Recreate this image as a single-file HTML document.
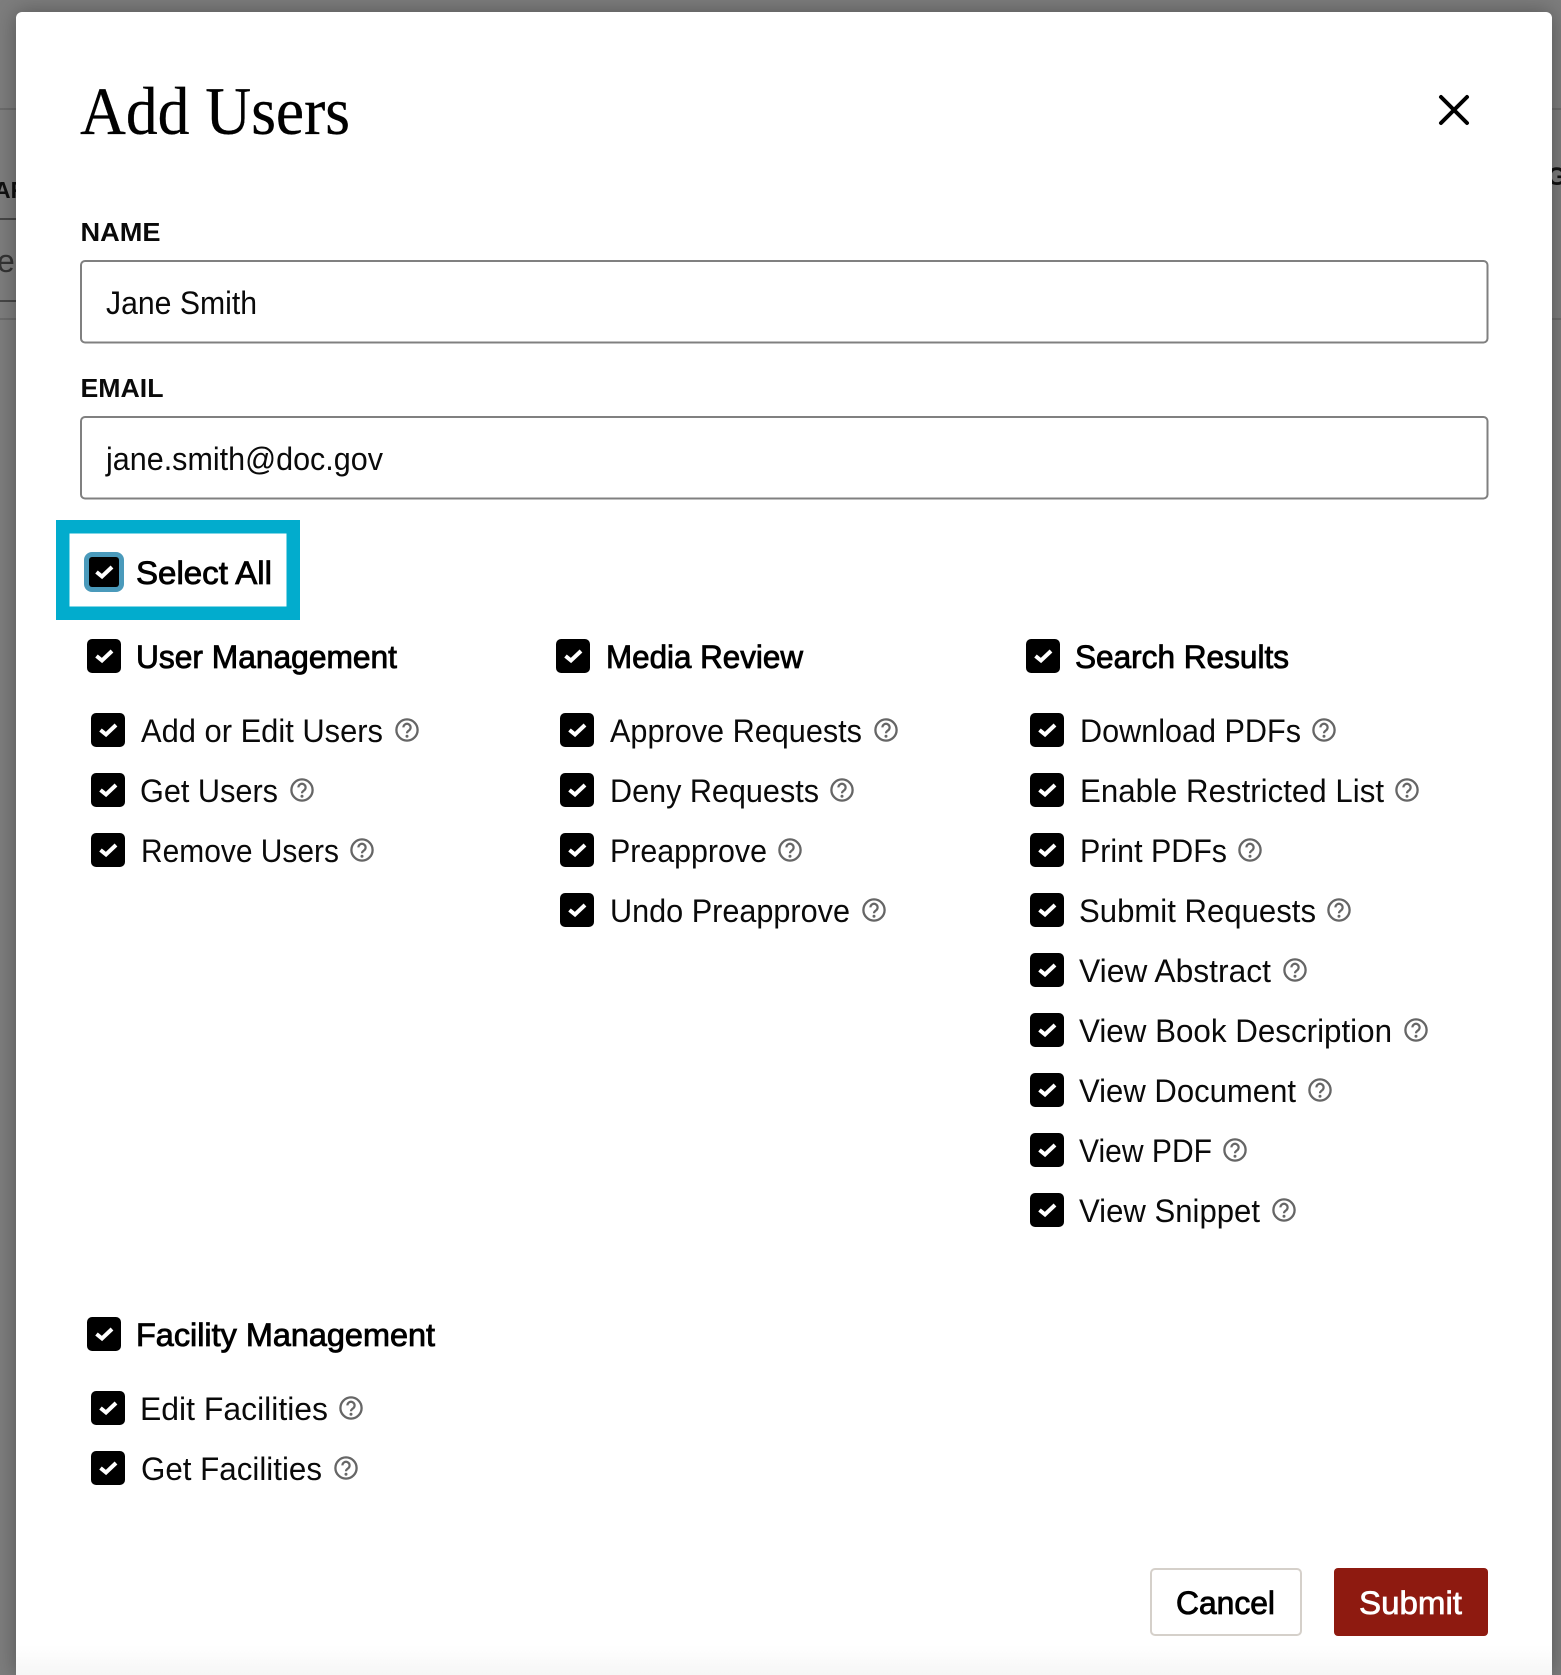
<!DOCTYPE html>
<html lang="en"><head><meta charset="utf-8"><title>Add Users</title>
<style>
html,body{margin:0;padding:0;width:1561px;height:1675px;overflow:hidden;background:#7d7d7d}
.w{position:relative;width:1561px;height:1675px;overflow:hidden}
.m{position:absolute;left:16px;top:12px;width:1536px;height:1663px;background:#fff;border-radius:6px 6px 0 0;box-shadow:0 0 22px rgba(0,0,0,.32)}
.f{position:absolute;left:16px;top:1645px;width:1536px;height:30px;background:linear-gradient(#fff,#f6f6f6)}
svg{position:absolute;left:0;top:0;display:block}
text{font-family:"Liberation Sans",sans-serif;font-size:32px;fill:#0a0a0a}
.s{font-family:"Liberation Serif",serif;font-size:68px;fill:#000;stroke:#000;stroke-width:.3px}
.b{stroke:#000;stroke-width:.85px;fill:#000}
</style></head><body><div class="w">
<svg width="1561" height="1675" style="z-index:0">
<g fill="#6c6c6c"><rect x="0" y="108" width="20" height="2"/><rect x="0" y="318" width="20" height="2"/><rect x="1545" y="108" width="16" height="2"/><rect x="1545" y="318" width="16" height="2"/></g>
<g fill="#464646"><rect x="0" y="218" width="20" height="2"/><rect x="0" y="300" width="20" height="2"/></g>
<text x="-6" y="198" style="font-size:23px;font-weight:700;fill:#111">AR</text>
<text x="-3" y="272" style="fill:#333">e</text>
<text x="1547" y="185" style="font-size:25px;font-weight:700;fill:#111">G</text>
</svg>
<div class="m"></div><div class="f"></div>
<svg width="1561" height="1675" viewBox="0 0 1561 1675" style="z-index:2">
<defs>
<g id="c"><rect width="34" height="34" rx="5" fill="#000"/><path d="M9.5 17 L15 21.5 L25 12" fill="none" stroke="#fff" stroke-width="4"/></g>
<g id="h"><circle r="10.6" fill="none" stroke="#666" stroke-width="2.3"/><path d="M-3.6-2.6a3.6 3.6 0 1 1 5.6 3c-1.3.8-2 1.4-2 2.8" fill="none" stroke="#666" stroke-width="2.2"/><circle cy="6.2" r="1.5" fill="#666"/></g>
</defs>

<text class="s" x="80" y="134" textLength="270" lengthAdjust="spacingAndGlyphs">Add Users</text>
<path d="M1441 97 L1467 123 M1467 97 L1441 123" stroke="#000" stroke-width="4" stroke-linecap="round" fill="none"/>

<text x="80.500" y="241" textLength="80" lengthAdjust="spacingAndGlyphs" style="font-size:26px;font-weight:700">NAME</text>
<rect x="81" y="261" width="1406.500" height="81.500" rx="4" fill="#fff" stroke="#808080" stroke-width="2"/>
<text x="106" y="314" textLength="151" lengthAdjust="spacingAndGlyphs">Jane Smith</text>

<text x="80.500" y="397" textLength="83" lengthAdjust="spacingAndGlyphs" style="font-size:26px;font-weight:700">EMAIL</text>
<rect x="81" y="417" width="1406.500" height="81.500" rx="4" fill="#fff" stroke="#808080" stroke-width="2"/>
<text x="106" y="470" textLength="277" lengthAdjust="spacingAndGlyphs">jane.smith@doc.gov</text>

<rect x="62.750" y="526.750" width="230.500" height="86.500" fill="none" stroke="#02accd" stroke-width="13.500"/>
<rect x="84" y="552" width="40" height="40" rx="8" fill="#4a9abb"/>
<rect x="89" y="557" width="30" height="30" rx="3" fill="#000"/>
<path d="M96.500 572 L102 576.500 L112 567" fill="none" stroke="#fff" stroke-width="4"/>
<text class="b" x="136" y="584" textLength="136" lengthAdjust="spacingAndGlyphs">Select All</text>

<!-- User Management -->
<use href="#c" x="87" y="639"/>
<text class="b" x="136" y="668" textLength="261" lengthAdjust="spacingAndGlyphs">User Management</text>
<use href="#c" x="91" y="713"/><text x="141" y="742" textLength="242" lengthAdjust="spacingAndGlyphs">Add or Edit Users</text><use href="#h" x="407" y="730"/>
<use href="#c" x="91" y="773"/><text x="140" y="802" textLength="138" lengthAdjust="spacingAndGlyphs">Get Users</text><use href="#h" x="302" y="790"/>
<use href="#c" x="91" y="833"/><text x="141" y="862" textLength="198" lengthAdjust="spacingAndGlyphs">Remove Users</text><use href="#h" x="362" y="850"/>

<!-- Media Review -->
<use href="#c" x="556" y="639"/>
<text class="b" x="606" y="668" textLength="197" lengthAdjust="spacingAndGlyphs">Media Review</text>
<use href="#c" x="560" y="713"/><text x="610" y="742" textLength="252" lengthAdjust="spacingAndGlyphs">Approve Requests</text><use href="#h" x="886" y="730"/>
<use href="#c" x="560" y="773"/><text x="610" y="802" textLength="209" lengthAdjust="spacingAndGlyphs">Deny Requests</text><use href="#h" x="842" y="790"/>
<use href="#c" x="560" y="833"/><text x="610" y="862" textLength="157" lengthAdjust="spacingAndGlyphs">Preapprove</text><use href="#h" x="790" y="850"/>
<use href="#c" x="560" y="893"/><text x="610" y="922" textLength="240" lengthAdjust="spacingAndGlyphs">Undo Preapprove</text><use href="#h" x="874" y="910"/>

<!-- Search Results -->
<use href="#c" x="1026" y="639"/>
<text class="b" x="1075" y="668" textLength="214" lengthAdjust="spacingAndGlyphs">Search Results</text>
<use href="#c" x="1030" y="713"/><text x="1080" y="742" textLength="221" lengthAdjust="spacingAndGlyphs">Download PDFs</text><use href="#h" x="1324" y="730"/>
<use href="#c" x="1030" y="773"/><text x="1080" y="802" textLength="304" lengthAdjust="spacingAndGlyphs">Enable Restricted List</text><use href="#h" x="1407" y="790"/>
<use href="#c" x="1030" y="833"/><text x="1080" y="862" textLength="147" lengthAdjust="spacingAndGlyphs">Print PDFs</text><use href="#h" x="1250" y="850"/>
<use href="#c" x="1030" y="893"/><text x="1079" y="922" textLength="237" lengthAdjust="spacingAndGlyphs">Submit Requests</text><use href="#h" x="1339" y="910"/>
<use href="#c" x="1030" y="953"/><text x="1079" y="982" textLength="192" lengthAdjust="spacingAndGlyphs">View Abstract</text><use href="#h" x="1295" y="970"/>
<use href="#c" x="1030" y="1013"/><text x="1079" y="1042" textLength="313" lengthAdjust="spacingAndGlyphs">View Book Description</text><use href="#h" x="1416" y="1030"/>
<use href="#c" x="1030" y="1073"/><text x="1079" y="1102" textLength="217" lengthAdjust="spacingAndGlyphs">View Document</text><use href="#h" x="1320" y="1090"/>
<use href="#c" x="1030" y="1133"/><text x="1079" y="1162" textLength="133" lengthAdjust="spacingAndGlyphs">View PDF</text><use href="#h" x="1235" y="1150"/>
<use href="#c" x="1030" y="1193"/><text x="1079" y="1222" textLength="181" lengthAdjust="spacingAndGlyphs">View Snippet</text><use href="#h" x="1284" y="1210"/>

<!-- Facility Management -->
<use href="#c" x="87" y="1317"/>
<text class="b" x="136" y="1346" textLength="299" lengthAdjust="spacingAndGlyphs">Facility Management</text>
<use href="#c" x="91" y="1391"/><text x="140" y="1420" textLength="188" lengthAdjust="spacingAndGlyphs">Edit Facilities</text><use href="#h" x="351" y="1408"/>
<use href="#c" x="91" y="1451"/><text x="141" y="1480" textLength="181" lengthAdjust="spacingAndGlyphs">Get Facilities</text><use href="#h" x="346" y="1468"/>

<!-- Buttons -->
<rect x="1151" y="1569" width="150" height="66" rx="4" fill="#fff" stroke="#d5d0ca" stroke-width="2"/>
<text class="b" x="1176" y="1614" textLength="99" lengthAdjust="spacingAndGlyphs">Cancel</text>
<rect x="1334" y="1568" width="154" height="68" rx="4" fill="#8e1a10"/>
<text x="1359" y="1614" textLength="103" lengthAdjust="spacingAndGlyphs" style="fill:#fff;stroke:#fff;stroke-width:.7px">Submit</text>
</svg>
</div></body></html>
